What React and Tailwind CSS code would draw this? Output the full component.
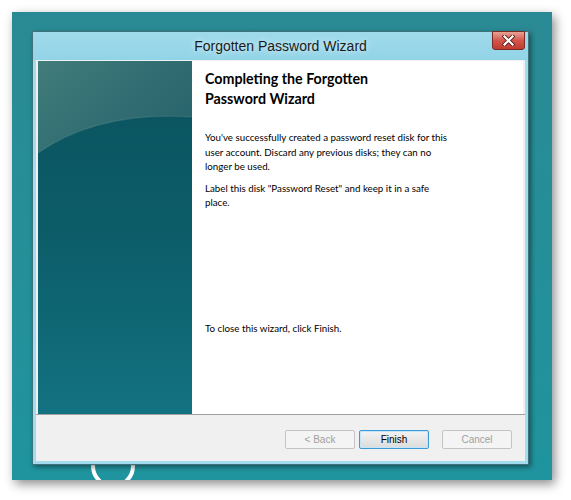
import React from 'react';

const CloseGlyph = () => (
  <svg width="13" height="11" viewBox="0 0 13 11">
    <path d="M2.5 1.5 L10.5 9.5 M10.5 1.5 L2.5 9.5" stroke="#5a1e1a" strokeWidth="4" strokeLinecap="square" />
    <path d="M2.5 1.5 L10.5 9.5 M10.5 1.5 L2.5 9.5" stroke="#ffffff" strokeWidth="2.2" strokeLinecap="square" />
  </svg>
);

// wizard side art
const SidePanel = () => (
  <svg width="154" height="353" viewBox="0 0 154 353" className="block">
    <defs>
      <linearGradient id="lower" x1="0" y1="0" x2="0" y2="1">
        <stop offset="0" stopColor="#0a525d" />
        <stop offset="0.5" stopColor="#0c5d69" />
        <stop offset="1" stopColor="#137281" />
      </linearGradient>
      <linearGradient id="upper" x1="0" y1="0" x2="1" y2="0.6">
        <stop offset="0" stopColor="#427c7b" />
        <stop offset="0.6" stopColor="#316d72" />
        <stop offset="1" stopColor="#29656c" />
      </linearGradient>
    </defs>
    <rect width="154" height="353" fill="url(#lower)" />
    <path d="M0 0 H154 V56 Q60 50 0 92 Z" fill="url(#upper)" />
    <path d="M0 92 Q60 50 154 56" fill="none" stroke="rgba(255,255,255,0.08)" strokeWidth="1.5" />
  </svg>
);

const App = () => {
  return (
    <div className="w-[571px] h-[500px] bg-white pt-[12px] pl-[12px] font-['Liberation_Sans',Arial,sans-serif]">
      <div className="relative overflow-hidden w-[540px] h-[468px] bg-gradient-to-b from-[#2a8a93] to-[#1f949e] shadow-[3px_4px_10px_rgba(0,0,0,0.45)] pt-[19px] pl-[20px]">
        {/* wallpaper ring peeking under the dialog */}
        <svg width="48" height="48" viewBox="0 0 48 48" className="absolute left-[77px] top-[430px]">
          <circle cx="24" cy="24" r="20" fill="none" stroke="#ffffff" strokeWidth="4" />
        </svg>

        <div className="relative z-10 w-[497px] h-[434px] border border-[#3f727a] bg-[#a3dcec] flex flex-col shadow-[2px_2px_5px_rgba(0,0,0,0.45)]">
          {/* Title bar */}
          <div className="h-[28px] flex items-center justify-center bg-gradient-to-b from-[#9fdaea] to-[#92d4e7] text-[14px] text-[#1b1b1b] [text-shadow:0_0_6px_rgba(255,255,255,0.9)]">
            Forgotten Password Wizard
          </div>
          <div className="absolute top-[-1px] right-[3px] w-[33px] h-[19px] flex items-center justify-center border border-[#7c2a24] rounded-b-[3px] bg-gradient-to-b from-[#e8a196] via-[#d3564b] to-[#c13a30]">
            <CloseGlyph />
          </div>

          {/* Body */}
          <div className="flex-1 mx-[3px] mb-[3px] bg-[#f0f0f0] flex flex-col">
            <div className="h-[355px] flex px-[2px] pt-[1px] border-b border-[#a0a0a0]">
              <SidePanel />
              <div className="flex-1 bg-white pl-[13px] pt-[8px] text-black font-['Lato','Liberation_Sans',sans-serif]">
                <h1 className="text-[14.25px] leading-[20px] font-bold">
                  Completing the Forgotten<br />Password Wizard
                </h1>
                <p className="mt-[21px] text-[9.75px] leading-[14.5px]">
                  You've successfully created a password reset disk for this<br />
                  user account. Discard any previous disks; they can no<br />
                  longer be used.
                </p>
                <p className="mt-[7px] text-[9.75px] leading-[14.5px]">
                  Label this disk "Password Reset" and keep it in a safe<br />
                  place.
                </p>
                <p className="mt-[111px] text-[9.75px] leading-[14.5px]">
                  To close this wizard, click Finish.
                </p>
              </div>
            </div>

            {/* Footer buttons */}
            <div className="flex-1 flex justify-end items-start pt-[15px] pr-[13px] text-[10px]">
              <button className="w-[70px] h-[19px] rounded-[2px] border border-[#c4c4c4] bg-[#f4f4f4] text-[#a0a0a0]">
                &lt; Back
              </button>
              <button className="ml-[4px] w-[70px] h-[19px] rounded-[2px] border border-[#3c9ad6] bg-gradient-to-b from-[#f3f3f3] to-[#dcdcdc] shadow-[inset_0_0_0_1px_#c6e6f8] text-black">
                Finish
              </button>
              <button className="ml-[13px] w-[70px] h-[19px] rounded-[2px] border border-[#c4c4c4] bg-[#f4f4f4] text-[#a0a0a0]">
                Cancel
              </button>
            </div>
          </div>
        </div>
      </div>
    </div>
  );
};

export default App;
